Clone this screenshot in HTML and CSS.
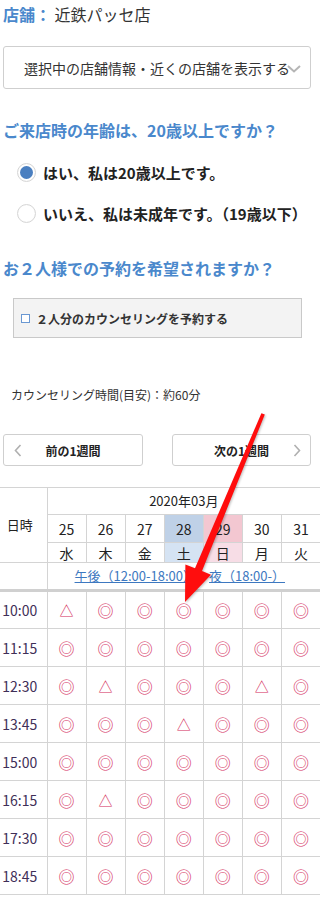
FILE: index.html
```html
<!DOCTYPE html>
<html lang="ja">
<head>
<meta charset="utf-8">
<title>予約</title>
<link rel="stylesheet" href="styles.css">
</head>
<body>
<div class="page">
  <div class="store"><span class="store-label">店舗：</span> 近鉄パッセ店</div>

  <div class="select">
    <span class="select-text">選択中の店舗情報・近くの店舗を表示する</span>
    <svg class="chev-down" width="14" height="8" viewBox="0 0 14 8"><path d="M1 1 L7 6.5 L13 1" fill="none" stroke="#b5b5b5" stroke-width="2"/></svg>
  </div>

  <h2 class="q q1">ご来店時の年齢は、20歳以上ですか？</h2>

  <div class="radios">
    <div class="radio-row"><span class="radio on"></span><span class="radio-text">はい、私は20歳以上です。</span></div>
    <div class="radio-row"><span class="radio"></span><span class="radio-text">いいえ、私は未成年です。（19歳以下）</span></div>
  </div>

  <h2 class="q q2">お２人様での予約を希望されますか？</h2>

  <div class="pair">
    <span class="box"></span><span class="pair-text">２人分のカウンセリングを予約する</span>
  </div>

  <p class="note">カウンセリング時間(目安)：約60分</p>

  <div class="weeknav">
    <div class="wbtn prev">
      <svg class="wchev" width="8" height="13" viewBox="0 0 8 13"><path d="M6.5 1 L1.5 6.5 L6.5 12" fill="none" stroke="#b0b0b0" stroke-width="1.6"/></svg>
      <span>前の1週間</span>
    </div>
    <div class="wbtn next">
      <span>次の1週間</span>
      <svg class="wchev" width="8" height="13" viewBox="0 0 8 13"><path d="M1.5 1 L6.5 6.5 L1.5 12" fill="none" stroke="#b0b0b0" stroke-width="1.6"/></svg>
    </div>
  </div>

  <table class="cal">
    <colgroup>
      <col class="c-time"><col class="c-day"><col class="c-day"><col class="c-day"><col class="c-day"><col class="c-day"><col class="c-day"><col class="c-day">
    </colgroup>
    <tr class="r-month">
      <td class="head-label" rowspan="3">日時</td>
      <td colspan="7">2020年03月</td>
    </tr>
    <tr class="r-date">
      <td>25</td><td>26</td><td>27</td><td class="sat">28</td><td class="sun">29</td><td>30</td><td>31</td>
    </tr>
    <tr class="r-wd">
      <td>水</td><td>木</td><td>金</td><td class="sat-l">土</td><td class="sun-l">日</td><td>月</td><td>火</td>
    </tr>
    <tr class="r-link">
      <td></td>
      <td colspan="7" class="links"><a href="#">午後（12:00-18:00）</a><a href="#">夜（18:00-）</a></td>
    </tr>
    <tr class="r-slot"><td class="t">10:00</td><td class="tri">△</td><td>◎</td><td>◎</td><td>◎</td><td>◎</td><td>◎</td><td>◎</td></tr>
    <tr class="r-slot"><td class="t">11:15</td><td>◎</td><td>◎</td><td>◎</td><td>◎</td><td>◎</td><td>◎</td><td>◎</td></tr>
    <tr class="r-slot"><td class="t">12:30</td><td>◎</td><td class="tri">△</td><td>◎</td><td>◎</td><td>◎</td><td class="tri">△</td><td>◎</td></tr>
    <tr class="r-slot"><td class="t">13:45</td><td>◎</td><td>◎</td><td>◎</td><td class="tri">△</td><td>◎</td><td>◎</td><td>◎</td></tr>
    <tr class="r-slot"><td class="t">15:00</td><td>◎</td><td>◎</td><td>◎</td><td>◎</td><td>◎</td><td>◎</td><td>◎</td></tr>
    <tr class="r-slot"><td class="t">16:15</td><td>◎</td><td class="tri">△</td><td>◎</td><td>◎</td><td>◎</td><td>◎</td><td>◎</td></tr>
    <tr class="r-slot"><td class="t">17:30</td><td>◎</td><td>◎</td><td>◎</td><td>◎</td><td>◎</td><td>◎</td><td>◎</td></tr>
    <tr class="r-slot"><td class="t">18:45</td><td>◎</td><td>◎</td><td>◎</td><td>◎</td><td>◎</td><td>◎</td><td>◎</td></tr>
  </table>
</div>

<svg class="arrow" width="320" height="898" viewBox="0 0 320 898">
  <polygon points="261.4,413.2 264.8,414.6 202,570.9 211,574.8 185,602 185.4,564.4 195.0,568.3" fill="#ff0d0d"/>
</svg>
</body>
</html>
```

FILE: styles.css
```css
* { box-sizing: border-box; }

html, body {
  margin: 0;
  padding: 0;
}

body {
  width: 320px;
  overflow-x: hidden;
  position: relative;
  font-family: "Noto Sans CJK JP", "Noto Sans", sans-serif;
  color: #333;
  background: #fff;
}

.page {
  display: flex;
  flex-direction: column;
}

.store {
  padding: 2px 3px 0;
  font-size: 16px;
  line-height: 24px;
  color: #333;
}

.store-label {
  color: #4a88cc;
  font-weight: bold;
}

.select {
  margin: 20px 0 0 3px;
  width: 308px;
  height: 43px;
  border: 1px solid #cfcfcf;
  border-radius: 3px;
  display: flex;
  align-items: center;
  padding-left: 20px;
  font-size: 14px;
  color: #333;
  white-space: nowrap;
}

.chev-down {
  flex: none;
  margin-left: -3px;
  margin-top: 2px;
}

.q {
  margin: 0;
  padding-left: 3px;
  font-size: 16px;
  line-height: 22px;
  font-weight: bold;
  color: #4a88cc;
  white-space: nowrap;
}

.q1 { margin-top: 30px; }
.q2 { margin-top: 29px; }

.radios {
  margin-top: 16px;
  display: flex;
  flex-direction: column;
  gap: 11px;
}

.radio-row {
  height: 30px;
  display: flex;
  align-items: center;
  white-space: nowrap;
  padding-left: 17px;
}

.radio {
  flex: none;
  width: 19px;
  height: 19px;
  border-radius: 50%;
  border: 1px solid #d6d6d6;
  background: #fff;
  box-shadow: inset 0 0 1px rgba(0,0,0,0.08);
  margin-right: 7px;
  position: relative;
}

.radio.on::after {
  content: "";
  position: absolute;
  left: 2px;
  top: 2px;
  width: 13px;
  height: 13px;
  border-radius: 50%;
  background: #4a7fc0;
}

.radio-text {
  font-size: 15px;
  font-weight: bold;
  color: #222;
}

.pair {
  margin: 19px 0 0 13px;
  width: 289px;
  height: 40px;
  border: 1px solid #c9c9c9;
  background: #f3f3f3;
  display: flex;
  align-items: center;
  padding-left: 7px;
}

.box {
  flex: none;
  width: 9px;
  height: 9px;
  border: 1px solid #6a98d2;
  background: #fff;
  margin-right: 6px;
}

.pair-text {
  font-size: 12px;
  font-weight: bold;
  color: #333;
}

.note {
  margin: 48px 0 0;
  padding-left: 11px;
  font-size: 12px;
  line-height: 18px;
  color: #333;
}

.weeknav {
  margin-top: 30px;
  display: flex;
  justify-content: space-between;
  padding: 0 9px 0 3px;
}

.wbtn {
  width: 140px;
  height: 32px;
  border: 1px solid #cfcfcf;
  border-radius: 3px;
  display: flex;
  align-items: center;
  font-size: 12px;
  font-weight: bold;
  color: #222;
  position: relative;
}

.wbtn.next { width: 139px; }

.wbtn span {
  flex: 1;
  text-align: center;
}

.wbtn.prev .wchev { margin-left: 10px; }
.wbtn.prev span { margin-right: 18px; }
.wbtn.next .wchev { margin-right: 9px; }
.wbtn.next span { margin-left: 17px; }

.cal {
  margin-top: 21px;
  border-collapse: collapse;
  table-layout: fixed;
  width: 321px;
  font-size: 13px;
  color: #222;
}

.c-time { width: 47px; }
.c-day { width: 39px; }

.cal td {
  border: 1px solid #d4d4d4;
  padding: 0;
  text-align: center;
  vertical-align: middle;
  line-height: 16px;
}

.cal tr > td:first-child { border-left: none; }

.r-month td { height: 27px; }
.r-date td { height: 28px; font-size: 14px; }
.r-wd td { height: 20px; font-size: 14px; }
.r-link td { height: 28px; border-bottom: 3px solid #d0d0d0; }

.head-label {
  font-size: 13px;
  padding-right: 7px !important;
}

.sat { background: #bfd1e7; }
.sun { background: #f3c7d1; }
.sat-l { background: #d5e3f3; }
.sun-l { background: #f7dde6; }

.links {
  text-align: left !important;
  padding-left: 27px !important;
  white-space: nowrap;
  overflow: hidden;
}

.links a {
  color: #3d78c0;
  text-decoration: underline;
  margin-right: 13px;
}

.r-slot td {
  height: 38px;
  font-size: 16px;
  color: #d42c5c;
}

.r-slot td.t {
  font-size: 14px;
  color: #3f2f58;
  padding-right: 7px;
}

.r-slot td.tri {
  font-size: 14px;
  color: #d42c5c;
}

.arrow {
  position: absolute;
  left: 0;
  top: 0;
  pointer-events: none;
  filter: drop-shadow(1px 1px 1px rgba(0,0,0,0.25));
}
```
